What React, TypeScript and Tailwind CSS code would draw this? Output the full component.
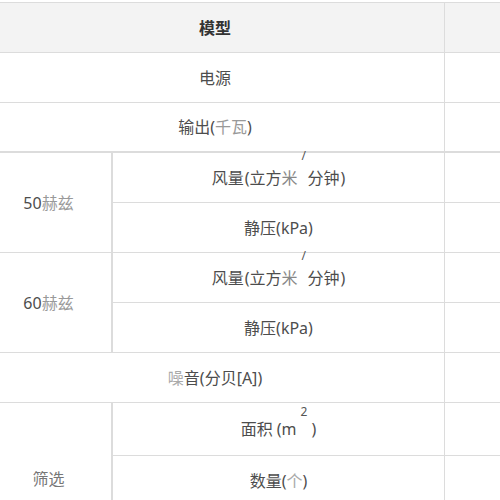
const line = "border-[#dcdcdc]";

function Sup({ children, top, w, left }: { children: React.ReactNode; top: string; w: string; left: string }) {
  return (
    <span className={`relative inline-block ${w}`}>
      <span className={`absolute ${left} ${top} text-[12px] leading-none text-[#555]`}>{children}</span>
    </span>
  );
}

function Airflow() {
  return (
    <span>
      风量<span className="ml-[1px]">(</span>立方<span className="text-[#888]">米</span>
      <Sup top="-top-[34px]" w="w-[10px]" left="left-[4px]">/</Sup>
      分钟<span className="ml-[1px]">)</span>
    </span>
  );
}

export default function App() {
  const cell = `flex items-center justify-center border-b ${line} h-[50px]`;
  const right = `border-b border-l ${line} h-[50px]`;
  return (
    <div
      className="min-h-screen bg-white overflow-hidden pt-[2px] text-[16px] text-[#4d4d4d]"
      style={{ fontFamily: '"Noto Sans", "Noto Sans CJK SC", sans-serif' }}
    >
      <div className={`ml-[-14px] w-[620px] border-t ${line} grid grid-cols-[127px_331px_162px]`}>
        {/* header */}
        <div className={`col-span-2 ${cell} bg-[#f3f3f3] h-[49px] font-bold text-[#333]`}>模型</div>
        <div className={`${right} bg-[#f3f3f3] h-[49px]`}></div>

        <div className={`col-span-2 ${cell}`}>电源</div>
        <div className={right}></div>

        <div className={`col-span-2 ${cell} h-[49px] border-b-2`}>
          <span>
            输出(<span className="text-[#999]">千瓦</span>)
          </span>
        </div>
        <div className={`${right} h-[49px] border-b-2`}></div>

        {/* 50Hz */}
        <div className={`row-span-2 flex items-center justify-center border-b border-r-2 ${line}`}>
          <span>
            50<span className="text-[#999]">赫兹</span>
          </span>
        </div>
        <div className={cell}>
          <Airflow />
        </div>
        <div className={right}></div>
        <div className={cell}>静压(kPa)</div>
        <div className={right}></div>

        {/* 60Hz */}
        <div className={`row-span-2 flex items-center justify-center border-b border-r-2 ${line}`}>
          <span>
            60<span className="text-[#999]">赫兹</span>
          </span>
        </div>
        <div className={cell}>
          <Airflow />
        </div>
        <div className={right}></div>
        <div className={cell}>静压(kPa)</div>
        <div className={right}></div>

        {/* noise */}
        <div className={`col-span-2 ${cell}`}>
          <span>
            <span className="text-[#aaa]">噪</span>音(分贝[A])
          </span>
        </div>
        <div className={right}></div>

        {/* filter */}
        <div className={`row-span-3 flex items-center justify-center border-b border-r-2 ${line}`}>
          <span className="text-[#777]">筛选</span>
        </div>
        <div className={`${cell} h-[53px]`}>
          <span>
            面积 (m<Sup top="-top-[29px]" w="w-[15px]" left="left-[4px]">2</Sup>)
          </span>
        </div>
        <div className={`${right} h-[53px]`}></div>
        <div className={cell}>
          <span>
            数量(<span className="text-[#aaa]">个</span>)
          </span>
        </div>
        <div className={right}></div>
        <div className={cell}></div>
        <div className={right}></div>
      </div>
    </div>
  );
}
